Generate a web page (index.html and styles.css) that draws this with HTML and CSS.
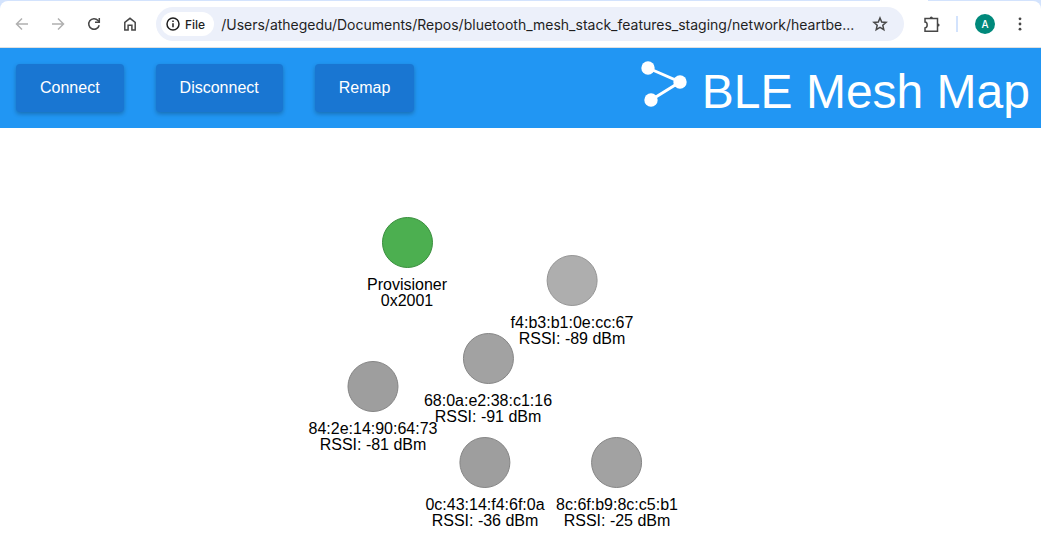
FILE: index.html
```html
<!DOCTYPE html>
<html lang="en">
<head>
<meta charset="utf-8">
<meta name="viewport" content="width=device-width, initial-scale=1">
<title>BLE Mesh Map</title>
<link rel="stylesheet" href="styles.css">
</head>
<body>
<div class="browser">
  <div class="tab-edge"><span class="tab-foot"></span></div>
  <div class="toolbar">
    <div class="nav">
      <button class="tool tool-off" aria-label="Back" disabled><svg viewBox="0 0 16 16"><path d="M14 8H3M8 2.5 2.5 8 8 13.5"/></svg></button>
      <button class="tool tool-off" aria-label="Forward" disabled><svg viewBox="0 0 16 16"><path d="M2 8h11M8 2.5 13.5 8 8 13.5"/></svg></button>
      <button class="tool" aria-label="Reload"><svg viewBox="0 0 16 16"><path d="M13.2 9.2A5.3 5.3 0 1 1 12 4.4L13.4 6"/><path d="M13.3 2v4.3H9"/></svg></button>
      <button class="tool" aria-label="Home"><svg viewBox="0 0 16 16"><path d="M2.8 14V6.3L8 2.3l5.2 4V14H9.9V9.2H6.1V14z"/></svg></button>
    </div>
    <div class="address">
      <button class="chip"><svg viewBox="0 0 16 16"><circle cx="8" cy="8" r="6"/><path d="M8 7.3V11.2M8 4.6V6.1"/></svg>File</button>
      <input class="url" type="text" aria-label="Address" value="/Users/athegedu/Documents/Repos/bluetooth_mesh_stack_features_staging/network/heartbe..." readonly>
      <button class="tool" aria-label="Bookmark this page"><svg viewBox="0 0 16 16"><path d="M8 2 9.7 6l4.4.4-3.3 2.9 1 4.3L8 11.3l-3.8 2.3 1-4.3-3.3-2.9L6.300 6z"/></svg></button>
    </div>
    <div class="extras">
      <button class="tool" aria-label="Extensions"><svg class="puzzle" viewBox="0 0 18 18"><path d="M2 2.500H14.500V15.300H2V11.900C4.900 11.600 4.900 6.400 2 6.100z"/><path class="knob" d="M6.700 2.200a1.600 1.600 0 0 1 3.200 0zM15 7.400a1.600 1.600 0 0 1 0 3.200z"/></svg></button>
      <span class="divider"></span>
      <button class="avatar" aria-label="Profile A">A</button>
      <button class="tool" aria-label="Menu"><svg viewBox="0 0 16 16"><g class="dots"><circle cx="8" cy="2.800" r="1.400"/><circle cx="8" cy="8" r="1.400"/><circle cx="8" cy="13.200" r="1.400"/></g></svg></button>
    </div>
  </div>
</div>
<header class="header">
  <div class="actions">
    <button class="action">Connect</button>
    <button class="action">Disconnect</button>
    <button class="action">Remap</button>
  </div>
  <div class="brand">
    <svg class="logo" viewBox="0 0 48 48" aria-hidden="true"><path d="M8 7 40 21 11 39"/><circle cx="8" cy="7" r="6.7"/><circle cx="40" cy="21" r="6.7"/><circle cx="11" cy="39" r="6.7"/></svg>
    <h1 class="title">BLE Mesh Map</h1>
  </div>
</header>
<main class="map">
  <div class="node node-provisioner"><span class="dot"></span><p class="label">Provisioner<br>0x2001</p></div>
  <div class="node node-f4"><span class="dot"></span><p class="label">f4:b3:b1:0e:cc:67<br>RSSI: -89 dBm</p></div>
  <div class="node node-68"><span class="dot"></span><p class="label">68:0a:e2:38:c1:16<br>RSSI: -91 dBm</p></div>
  <div class="node node-84"><span class="dot"></span><p class="label">84:2e:14:90:64:73<br>RSSI: -81 dBm</p></div>
  <div class="node node-0c"><span class="dot"></span><p class="label">0c:43:14:f4:6f:0a<br>RSSI: -36 dBm</p></div>
  <div class="node node-8c"><span class="dot"></span><p class="label">8c:6f:b9:8c:c5:b1<br>RSSI: -25 dBm</p></div>
</main>
</body>
</html>
```
FILE: styles.css
```css
* { box-sizing: border-box; }

body {
  margin: 0;
  min-height: 100vh;
  display: flex;
  flex-direction: column;
  background: #fff;
  color: #000;
  font-family: "Liberation Sans", Arial, sans-serif;
  font-size: 16px;
}

button, input { border: 0; padding: 0; background: none; color: inherit; font: inherit; }

.browser {
  background: #d3e3fd;
  border-bottom: 1px solid #e0e0e0;
  font-family: Inter, Roboto, sans-serif;
  color: #1f1f1f;
}
.tab-edge { height: 1px; display: flex; justify-content: flex-end; padding-right: 113px; }
.tab-foot { width: 48px; background: #fff; }
.toolbar {
  height: 46px;
  display: flex;
  align-items: center;
  gap: 16px;
  padding: 0 13px 0 14px;
  background: #fff;
  border-radius: 8px 8px 0 0;
}
.nav { display: flex; gap: 20px; margin-right: 2px; }
.tool { width: 16px; height: 16px; flex: none; display: grid; place-items: center; color: #474747; }
.tool-off { color: #b0b0b0; }
.tool svg, .chip svg {
  width: 16px;
  height: 16px;
  fill: none;
  stroke: currentColor;
  stroke-width: 1.5;
}
.tool .puzzle { width: 18px; height: 18px; }
.tool .knob, .dots { fill: currentColor; stroke: none; }
.address {
  flex: 1;
  min-width: 0;
  height: 34px;
  display: flex;
  align-items: center;
  gap: 7px;
  padding: 0 16px 0 5px;
  border-radius: 17px;
  background: #ecf0fa;
}
.chip {
  height: 24px;
  display: flex;
  align-items: center;
  gap: 4px;
  padding: 0 9px 0 4px;
  border-radius: 12px;
  background: #fff;
  font-size: 12px;
  font-weight: 500;
}
.url { flex: 1; min-width: 0; font-size: 14px; outline: 0; }
.extras { display: flex; align-items: center; gap: 17px; margin-left: 3px; }
.divider { width: 2px; height: 16px; background: #d3e3fd; }
.avatar {
  width: 20px;
  height: 20px;
  border-radius: 50%;
  background: #00897b;
  color: #fff;
  font-size: 10px;
  font-weight: 500;
}

.header {
  min-height: 80px;
  display: flex;
  align-items: center;
  justify-content: space-between;
  padding: 0 11px 0 16px;
  background: #2196f3;
  color: #fff;
}
.actions { display: flex; gap: 32px; }
.action {
  height: 48px;
  padding: 0 24px;
  border-radius: 4px;
  background: #1976d2;
  box-shadow: 0 2px 4px rgba(0, 0, 0, .25);
}
.brand { display: flex; align-items: center; gap: 14px; }
.logo { width: 48px; height: 48px; margin-bottom: 6px; fill: currentColor; }
.logo path { fill: none; stroke: currentColor; stroke-width: 3; }
.title { margin: 0; padding-top: 8px; font-size: 48px; line-height: 54px; font-weight: 400; }

.map { position: relative; flex: 1; min-height: 416px; }
.node {
  position: absolute;
  transform: translateX(-50%);
  display: flex;
  flex-direction: column;
  align-items: center;
  gap: 9px;
}
.dot {
  width: 51px;
  height: 51px;
  border: 1px solid #858585;
  border-radius: 50%;
  background: #a2a2a2;
}
.label { margin: 0; line-height: 16px; text-align: center; white-space: nowrap; }

.node-provisioner { left: 407px; top: 89px; }
.node-f4 { left: 572px; top: 127px; }
.node-68 { left: 488px; top: 205px; }
.node-84 { left: 373px; top: 233px; }
.node-0c { left: 485px; top: 309px; }
.node-8c { left: 617px; top: 309px; }
.node-provisioner .dot { background: #4caf50; border-color: #388e3c; }
.node-f4 .dot { background: #aeaeae; border-color: #959595; }
.node-84 .dot, .node-0c .dot { background: #9e9e9e; }
```
